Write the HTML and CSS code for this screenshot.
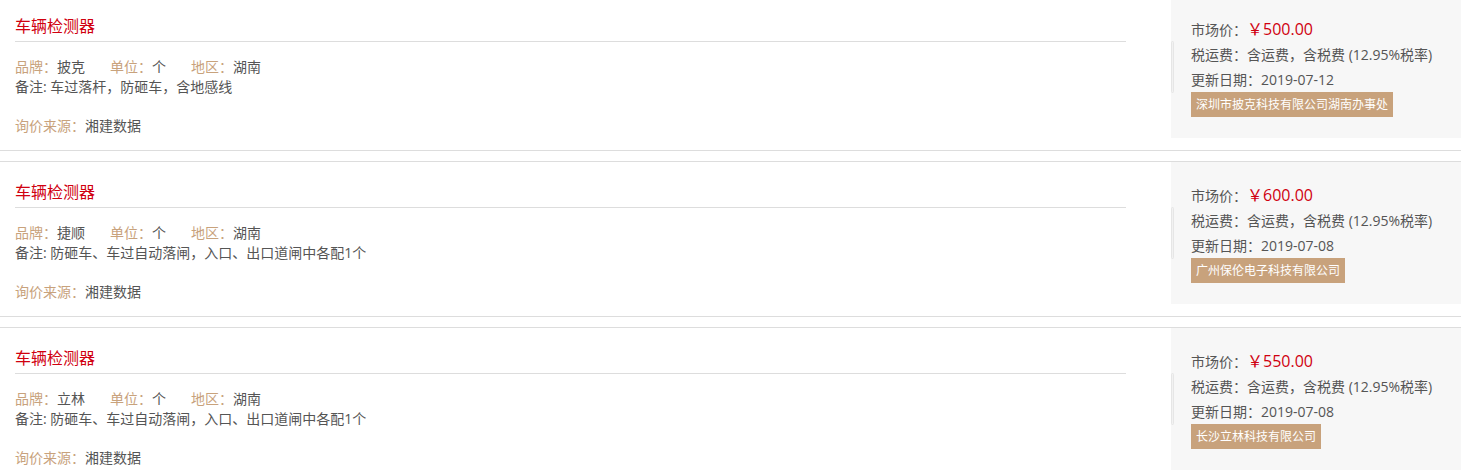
FILE: index.html
```html
<!DOCTYPE html>
<html lang="zh-CN">
<head>
<meta charset="utf-8">
<title>车辆检测器</title>
<link rel="stylesheet" href="styles.css">
</head>
<body>
<div class="list">
  <div class="item">
    <div class="info">
      <h3 class="title">车辆检测器</h3>
      <div class="meta"><span class="field"><span class="lbl">品牌：</span>披克</span><span class="field"><span class="lbl">单位：</span>个</span><span class="field"><span class="lbl">地区：</span>湖南</span></div>
      <div class="remark">备注: 车过落杆，防砸车，含地感线</div>
      <div class="source"><span class="lbl">询价来源：</span>湘建数据</div>
    </div>
    <div class="panel">
      <div class="bar"></div>
      <div class="pinfo">
        <div class="pline">市场价：<span class="price">￥500.00</span></div>
        <div class="pline">税运费：含运费，含税费 (12.95%税率)</div>
        <div class="pline">更新日期：2019-07-12</div>
        <div class="badge">深圳市披克科技有限公司湖南办事处</div>
      </div>
    </div>
  </div>
  <div class="item">
    <div class="info">
      <h3 class="title">车辆检测器</h3>
      <div class="meta"><span class="field"><span class="lbl">品牌：</span>捷顺</span><span class="field"><span class="lbl">单位：</span>个</span><span class="field"><span class="lbl">地区：</span>湖南</span></div>
      <div class="remark">备注: 防砸车、车过自动落闸，入口、出口道闸中各配1个</div>
      <div class="source"><span class="lbl">询价来源：</span>湘建数据</div>
    </div>
    <div class="panel">
      <div class="bar"></div>
      <div class="pinfo">
        <div class="pline">市场价：<span class="price">￥600.00</span></div>
        <div class="pline">税运费：含运费，含税费 (12.95%税率)</div>
        <div class="pline">更新日期：2019-07-08</div>
        <div class="badge">广州保伦电子科技有限公司</div>
      </div>
    </div>
  </div>
  <div class="item">
    <div class="info">
      <h3 class="title">车辆检测器</h3>
      <div class="meta"><span class="field"><span class="lbl">品牌：</span>立林</span><span class="field"><span class="lbl">单位：</span>个</span><span class="field"><span class="lbl">地区：</span>湖南</span></div>
      <div class="remark">备注: 防砸车、车过自动落闸，入口、出口道闸中各配1个</div>
      <div class="source"><span class="lbl">询价来源：</span>湘建数据</div>
    </div>
    <div class="panel">
      <div class="bar"></div>
      <div class="pinfo">
        <div class="pline">市场价：<span class="price">￥550.00</span></div>
        <div class="pline">税运费：含运费，含税费 (12.95%税率)</div>
        <div class="pline">更新日期：2019-07-08</div>
        <div class="badge">长沙立林科技有限公司</div>
      </div>
    </div>
  </div>
</div>
</body>
</html>
```

FILE: styles.css
```css
* { box-sizing: border-box; }
html, body { margin: 0; padding: 0; background: #fff; }
body {
  font-family: "Open Sans", "Noto Sans CJK SC", sans-serif;
  font-size: 14px;
  color: #555;
}
.list {
  margin-top: -5px;
  display: flex;
  flex-direction: column;
  gap: 10px;
}
.item {
  display: flex;
  align-items: flex-start;
  border-top: 1px solid #ddd;
  border-bottom: 1px solid #ddd;
  height: 156px;
}
.info {
  flex: 0 0 1126px;
  padding-left: 15px;
}
.title {
  margin: 15px 0 0;
  font-size: 16px;
  font-weight: normal;
  line-height: 30px;
  color: #d0000f;
  border-bottom: 1px solid #ddd;
}
.meta {
  margin-top: 15px;
  line-height: 20px;
  display: flex;
  gap: 25px;
}
.lbl { color: #c8a27c; }
.remark { line-height: 19px; }
.source {
  margin-top: 20px;
  line-height: 20px;
}
.panel {
  flex: 1;
  margin-left: 45px;
  height: 142px;
  background: #f7f7f7;
  display: flex;
  align-items: center;
}
.bar {
  flex: 0 0 3px;
  height: 52px;
  background: #f2f2f2;
  border: 1px solid #e6e6e6;
  border-radius: 2px;
}
.pinfo {
  margin-left: 17px;
}
.pline {
  line-height: 25px;
  white-space: nowrap;
}
.price {
  color: #d0000f;
  font-size: 16px;
}
.badge {
  display: inline-block;
  background: #c8a27c;
  color: #fff;
  font-size: 12px;
  line-height: 25px;
  height: 25px;
  padding: 0 5px;
}
```
